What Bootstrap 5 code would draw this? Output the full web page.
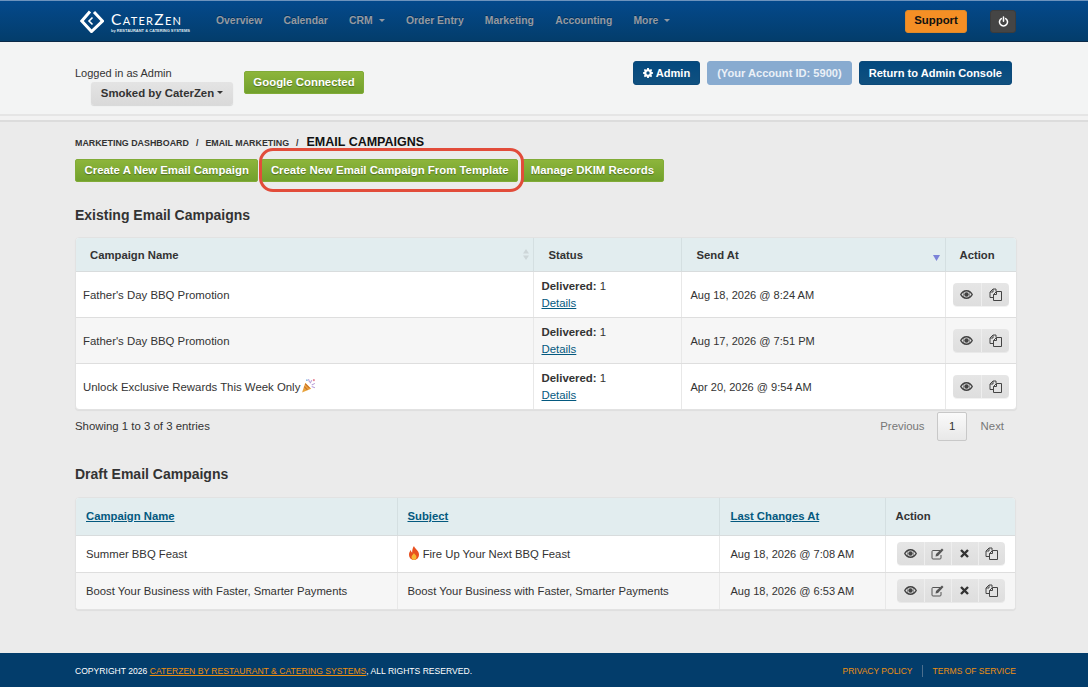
<!DOCTYPE html>
<html lang="en">

<head>
    <meta charset="UTF-8" />
    <meta name="viewport" content="width=device-width, initial-scale=1.0">
    <title>Email Campaigns</title>
    <link href="https://cdn.jsdelivr.net/npm/bootstrap@5.3.0/dist/css/bootstrap.min.css" rel="stylesheet">
    <style>
        html, body { height: 100%; }
        body { font-family: "Liberation Sans", Arial, sans-serif; font-size: 11.4px; color: #333; background: #ebebeb; height: 687px; overflow: hidden; display: flex; flex-direction: column; }
        .page-wrap { width: 942px; margin-left: 75px; }
        .top-bar { height: 42px; background: linear-gradient(#04498c, #033d6b); border-top: 1px solid #6d93bd; border-bottom: 1px solid #0b2a48; padding: 0; }
        .top-inner { height: 100%; display: flex; align-items: center; }
        .brand-box { width: 136px; margin-left: 5px; display: flex; align-items: center; gap: 7px; color: #fff; text-decoration: none; }
        .brand-name { font-family: Lato, sans-serif; font-size: 15.500px; line-height: 18px; letter-spacing: 1.300px; font-variant: small-caps; display: block; }
        .brand-sub { font-size: 4px; line-height: 5px; font-weight: bold; display: block; white-space: nowrap; color: #dfe8f0; }
        .top-nav { gap: 21.200px; }
        .top-nav .nav-link { color: #959aa1; font-size: 10.400px; font-weight: bold; padding: 0; text-shadow: 0 -1px 0 rgba(0,0,0,.3); }
        .top-nav .dropdown-toggle::after { border-top-width: 3px; border-left-width: 3px; border-right-width: 3px; margin-left: 6px; }
        .btn-support { background: #f58f25; color: #111; font-size: 11.4px; font-weight: bold; height: 23px; width: 62px; padding: 0; border: 1px solid #e08a2a; border-radius: 3px; margin-left: auto; }
        .btn-power { background: #454545; width: 26px; height: 23px; padding: 0; border: 1px solid #3c3c3c; border-radius: 3px; margin-left: 23px; margin-right: 1px; display: flex; align-items: center; justify-content: center; }
        .acct-band { height: 74px; background: #f3f4f4; border-bottom: 2px solid #e5e5e5; }
        .acct-rule { height: 6px; border-bottom: 2px solid #dcdcdc; background: #f2f2f2; }
        .acct-inner { display: flex; justify-content: space-between; padding-right: 5px; }
        .logged-box { width: 158px; padding-top: 24px; line-height: 15px; font-size: 11px; }
        .btn-store { display: block; background: linear-gradient(#e4e4e4, #d9d9d9); color: #333; font-size: 11.4px; font-weight: bold; width: 142px; height: 23px; padding: 0; border: 0; border-radius: 3px; margin: 1px 0 0 16px; box-shadow: 0 1px 1px rgba(0,0,0,.12); }
        .btn-store::after { border-top-width: 3px; border-left-width: 3px; border-right-width: 3px; margin-left: 3px; }
        .btn-leaf { background: linear-gradient(#8db53b, #71a02c); color: #fff; font-size: 11.4px; font-weight: bold; line-height: 21px; height: 23px; padding: 0 8.500px; border: 1px solid #81ab37; border-radius: 2px; text-shadow: 0 1px 1px rgba(0,0,0,.35); white-space: nowrap; }
        .btn-leaf:hover { color: #fff; }
        .google-btn { margin: 29px 0 0 11px; width: 120px; padding: 0; }
        .acct-right { display: flex; gap: 7px; padding-top: 19px; }
        .btn-navy { background: linear-gradient(#03497f, #10507f); background-color: #0d4f81; color: #fff; font-size: 11.100px; font-weight: bold; height: 24px; padding: 0 9px; border: 1px solid #0c4a7a; border-radius: 3px; display: flex; align-items: center; gap: 3px; }
        .btn-navy.btn-faded { background: #88abd0; border-color: #88abd0; color: #eaf0f7; }
        .crumb-line { margin-top: 13px; font-size: 8.900px; line-height: 14px; font-weight: bold; display: flex; align-items: baseline; gap: 7px; color: #333; }
        .crumb-line strong { font-size: 12.500px; color: #111; margin-left: 1px; }
        .action-row { position: relative; display: flex; gap: 3px; margin-top: 9px; }
        .highlight-ring { position: absolute; left: 184px; top: -11px; width: 265px; height: 44px; border: 3px solid #e24c3a; border-radius: 14px; pointer-events: none; }
        .section-title { font-size: 14px; line-height: 18px; font-weight: bold; color: #333; margin: 0; }
        .existing-title { margin-top: 24px; }
        .existing-card { margin-top: 13px; }
        .draft-title { margin-top: 24px; }
        .draft-card { margin-top: 14px; margin-right: 1px; }
        .table-card { background: #fff; border: 1px solid #e2e2e2; border-radius: 4px; overflow: hidden; box-shadow: 0 1px 1px rgba(0,0,0,.06); }
        .data-grid { --bs-table-bg: transparent; --bs-table-color: #333; margin: 0; font-size: 11.4px; table-layout: fixed; width: 100%; }
        .data-grid th { background: #e2edef; font-weight: bold; font-size: 11.300px; color: #333; vertical-align: middle; border-right: 1px solid #d4dfe1; border-bottom: 1px solid #d8dcdd; padding: 2px 0 0 15px; position: relative; }
        .data-grid td { vertical-align: middle; border-right: 1px solid #e8e8e8; border-bottom: 1px solid #dedede; padding: 2px 0 0 8px; }
        .data-grid td:last-child { padding-top: 0; }
        .data-grid tr > :last-child { border-right: 0; }
        .data-grid tbody tr:last-child td { border-bottom: 0; }
        .data-grid tbody tr:nth-child(even) td { background: #f6f6f6; }
        .data-grid td.stamp-cell { font-size: 11.050px; }
        .sent-grid thead tr { height: 33px; }
        .sent-grid tbody tr { height: 46px; }
        .sent-grid td { line-height: 17px; }
        .sent-grid th:first-child { padding-left: 14px; }
        .sent-grid td:first-child { padding-left: 7px; }
        .sent-grid td:nth-child(3) { padding-left: 9px; }
        .sent-grid th:last-child { padding-left: 14px; }
        .sent-grid td:last-child { padding-left: 7px; }
        .draft-grid thead tr { height: 37px; }
        .draft-grid tbody tr { height: 37px; }
        .draft-grid th, .draft-grid td { padding-left: 10px; }
        .draft-grid th { padding-top: 0; }
        .draft-grid td { font-size: 11.300px; }
        .draft-grid th:nth-child(3), .draft-grid td:nth-child(3) { padding-left: 11px; }
        .draft-grid td:last-child { padding-left: 11px; }
        .draft-grid .act-group span { width: 27px; }
        .data-grid a { color: #04597f; }
        .sort-mark { position: absolute; right: 4px; top: 11px; }
        .sort-mark.sort-down { top: 17px; right: 5px; }
        .act-group { display: inline-flex; height: 23px; border-radius: 4px; overflow: hidden; background: linear-gradient(#e6e6e6, #dedede); box-shadow: 0 1px 0 rgba(0,0,0,.05); vertical-align: middle; }
        .act-group span { width: 28px; display: flex; align-items: center; justify-content: center; border-left: 1px solid #eeeeee; }
        .act-group span:first-child { border-left: 0; }
        .emoji-mark { margin-left: 1px; vertical-align: -2px; }
        .table-foot { display: flex; justify-content: space-between; align-items: center; height: 31px; padding-top: 2px; }
        .pager-box { display: flex; align-items: center; color: #777; padding-right: 13px; }
        .pager-current { width: 30px; height: 29px; display: flex; align-items: center; justify-content: center; border: 1px solid #c8c8c8; border-radius: 2px; background: linear-gradient(#fafafa, #e8e8e8); margin: 0 13.500px 0 12.500px; color: #333; }
        .site-foot { margin-top: auto; height: 34px; padding-top: 2px; background: #033d6b; color: #fff; font-size: 8.580px; display: flex; align-items: center; }
        .foot-inner { display: flex; justify-content: space-between; width: 941px; margin-left: 75px; }
        .site-foot a { color: #ee8f10; text-decoration-thickness: 1px; }
        .foot-links { display: flex; gap: 9px; font-size: 8.500px; }
        .foot-links a { text-decoration: none; }
        .foot-links a + a { border-left: 1px solid #4c6f8e; padding-left: 10px; }
    </style>
</head>

<body>
    <nav class="navbar top-bar">
        <div class="page-wrap top-inner">
            <a class="brand-box" href="#">
                <svg width="24" height="24" viewBox="0 0 24 24" fill="none" stroke="#fff">
                    <path d="M10 2.500 L1.800 12 L11.500 22.500 L22.500 12 L14 3" stroke-width="3" />
                    <path d="M12.500 8.500 L9 12 L12.500 15.500" stroke-width="1.600" />
                </svg>
                <span>
                    <span class="brand-name">CaterZen</span>
                    <span class="brand-sub">by RESTAURANT &amp; CATERING SYSTEMS</span>
                </span>
            </a>
            <ul class="nav top-nav">
                <li class="nav-item"><a class="nav-link" href="#">Overview</a></li>
                <li class="nav-item"><a class="nav-link" href="#">Calendar</a></li>
                <li class="nav-item"><a class="nav-link dropdown-toggle" href="#">CRM</a></li>
                <li class="nav-item"><a class="nav-link" href="#">Order Entry</a></li>
                <li class="nav-item"><a class="nav-link" href="#">Marketing</a></li>
                <li class="nav-item"><a class="nav-link" href="#">Accounting</a></li>
                <li class="nav-item"><a class="nav-link dropdown-toggle" href="#">More</a></li>
            </ul>
            <button class="btn btn-support">Support</button>
            <button class="btn btn-power">
                <svg width="11" height="11" viewBox="0 0 12 12" fill="none" stroke="#fff" stroke-width="1.700" stroke-linecap="round">
                    <path d="M3.600 2.800 A4.400 4.400 0 1 0 8.400 2.800" />
                    <path d="M6 1 V5.600" />
                </svg>
            </button>
        </div>
    </nav>

    <div class="acct-band">
        <div class="page-wrap acct-inner">
            <div class="d-flex">
                <div class="logged-box">
                    Logged in as Admin
                    <button class="btn btn-store dropdown-toggle">Smoked by CaterZen</button>
                </div>
                <div><button class="btn btn-leaf google-btn">Google Connected</button></div>
            </div>
            <div class="acct-right">
                <button class="btn btn-navy">
                    <svg width="10" height="10" viewBox="0 0 12 12" fill="#fff">
                        <path fill-rule="evenodd" d="M5 0h2l.3 1.600 1 .4L9.700 1.100l1.300 1.300-.9 1.400.4 1L12 5v2l-1.500.3-.4 1 .9 1.400-1.300 1.300-1.400-.9-1 .4L7 12H5l-.3-1.500-1-.4-1.400.9L1 9.700l.9-1.400-.4-1L0 7V5l1.500-.3.4-1-.9-1.300L2.300 1.100l1.400.9 1-.4zM6 4a2 2 0 1 0 0 4 2 2 0 0 0 0-4z" />
                    </svg>
                    Admin
                </button>
                <button class="btn btn-navy btn-faded">(Your Account ID: 5900)</button>
                <button class="btn btn-navy">Return to Admin Console</button>
            </div>
        </div>
    </div>
    <div class="acct-rule"></div>

    <main class="page-wrap">
        <div class="crumb-line">
            <span>MARKETING DASHBOARD</span><span>/</span><span>EMAIL MARKETING</span><span>/</span><strong>EMAIL CAMPAIGNS</strong>
        </div>
        <div class="action-row">
            <a class="btn btn-leaf" href="#">Create A New Email Campaign</a>
            <a class="btn btn-leaf" href="#">Create New Email Campaign From Template</a>
            <a class="btn btn-leaf" href="#">Manage DKIM Records</a>
            <div class="highlight-ring"></div>
        </div>

        <h2 class="section-title existing-title">Existing Email Campaigns</h2>
        <div class="table-card existing-card">
            <table class="table data-grid sent-grid">
                <colgroup>
                    <col style="width: 457px"><col style="width: 148px"><col style="width: 264px"><col>
                </colgroup>
                <thead>
                    <tr>
                        <th>Campaign Name
                            <svg class="sort-mark" width="6" height="11" viewBox="0 0 6 11" fill="#cdd6d8"><path d="M3 0 6 4.500H0zM3 11 0 6.500h6z" /></svg>
                        </th>
                        <th>Status</th>
                        <th>Send At
                            <svg class="sort-mark sort-down" width="7" height="6" viewBox="0 0 7 6" fill="#7b82d8"><path d="M0 0h7L3.500 6z" /></svg>
                        </th>
                        <th>Action</th>
                    </tr>
                </thead>
                <tbody id="sentRows"></tbody>
            </table>
        </div>
        <div class="table-foot">
            <span>Showing 1 to 3 of 3 entries</span>
            <div class="pager-box"><span>Previous</span><span class="pager-current">1</span><span>Next</span></div>
        </div>

        <h2 class="section-title draft-title">Draft Email Campaigns</h2>
        <div class="table-card draft-card">
            <table class="table data-grid draft-grid">
                <colgroup>
                    <col style="width: 321px"><col style="width: 322px"><col style="width: 166px"><col>
                </colgroup>
                <thead>
                    <tr>
                        <th><a href="#">Campaign Name</a></th>
                        <th><a href="#">Subject</a></th>
                        <th><a href="#">Last Changes At</a></th>
                        <th>Action</th>
                    </tr>
                </thead>
                <tbody id="draftRows"></tbody>
            </table>
        </div>
    </main>

    <footer class="site-foot">
        <div class="foot-inner">
            <span>COPYRIGHT 2026 <a href="#">CATERZEN BY RESTAURANT &amp; CATERING SYSTEMS</a>, ALL RIGHTS RESERVED.</span>
            <div class="foot-links"><a href="#">PRIVACY POLICY</a><a href="#">TERMS OF SERVICE</a></div>
        </div>
    </footer>

    <script src="https://cdn.jsdelivr.net/npm/bootstrap@5.3.0/dist/js/bootstrap.bundle.min.js"></script>
    <script>
        const eyeIcon = '<svg width="13" height="9" viewBox="0 0 13 9"><path fill="#444" fill-rule="evenodd" d="M6.500 0C3.500 0 1.200 2 0 4.500 1.200 7 3.500 9 6.500 9S11.800 7 13 4.500C11.800 2 9.500 0 6.500 0zM6.500 1.500a3 3 0 1 1 0 6 3 3 0 0 1 0-6zM1.500 4.500a6 6 0 0 1 2.500-2.300 3.500 3.500 0 0 0 0 4.600 6 6 0 0 1-2.500-2.300zM11.500 4.500A6 6 0 0 1 9 6.800a3.500 3.500 0 0 0 0-4.600 6 6 0 0 1 2.500 2.300z"/><circle cx="6.500" cy="4.500" r="2.200" fill="#444"/></svg>';
        const copyIcon = '<svg width="13" height="13" viewBox="0 0 13 13" fill="none" stroke="#444" stroke-width="1"><path d="M7 3.500V1H4L1 4v5.500h3.500"/><path d="M4 1v3H1"/><path d="M4.500 6.500l3-3h5v9h-8z" fill="#e2e2e2"/><path d="M7.500 3.500v3h-3"/></svg>';
        const editIcon = '<svg width="13" height="12" viewBox="0 0 13 12" fill="none" stroke="#555"><path d="M9 2.500H2A1 1 0 0 0 1 3.500v6.500a1 1 0 0 0 1 1h7a1 1 0 0 0 1-1V7"/><path d="M4.500 8.500 5 6l6-5.500 1.500 1.500L7 8z" fill="#555" stroke="none"/></svg>';
        const closeIcon = '<svg width="9" height="9" viewBox="0 0 9 9" stroke="#333" stroke-width="2.400"><path d="M1 1l7 7M8 1l-7 7"/></svg>';
        const partyIcon = '<svg class="emoji-mark" width="15" height="15" viewBox="0 0 14 14"><path d="M1 13.500 4 4.500l5.500 5.500z" fill="#e8a33d"/><path d="M3 8l3 3M4 5.500l4 4" stroke="#c9702a" stroke-width="1"/><path d="M7 1l1 3M10 2 8.500 5M13 5l-3 1.500M13 9l-3-1" stroke="#b9a0d8" stroke-width="1"/><circle cx="12" cy="2" r="1" fill="#e88a9a"/><circle cx="5.500" cy="2" r=".8" fill="#7cb6e0"/></svg>';
        const fireIcon = '<svg width="12" height="14" viewBox="0 0 12 14" style="vertical-align:-2px"><path d="M6 0c.5 2.500 5 4.500 5 8.500C11 11.500 9 14 6 14S1 11.500 1 8.500C1 6.500 2 5 3 4c0 1.500.5 2.300 1.200 2.500C4 4 4.800 1.500 6 0z" fill="#e8501f"/><path d="M6 7c.3 1.300 2.500 2.300 2.500 4C8.500 12.700 7.300 14 6 14s-2.500-1.300-2.500-3C3.500 9.500 5.300 8.500 6 7z" fill="#f7b633"/></svg>';

        const sentCampaigns = [
            { name: "Father's Day BBQ Promotion", at: "Aug 18, 2026 @ 8:24 AM" },
            { name: "Father's Day BBQ Promotion", at: "Aug 17, 2026 @ 7:51 PM" },
            { name: "Unlock Exclusive Rewards This Week Only" + partyIcon, at: "Apr 20, 2026 @ 9:54 AM" }
        ];
        const draftCampaigns = [
            { name: "Summer BBQ Feast", subject: fireIcon + " Fire Up Your Next BBQ Feast", at: "Aug 18, 2026 @ 7:08 AM" },
            { name: "Boost Your Business with Faster, Smarter Payments", subject: "Boost Your Business with Faster, Smarter Payments", at: "Aug 18, 2026 @ 6:53 AM" }
        ];

        function actions(icons) {
            return '<div class="act-group">' + icons.map((i) => "<span>" + i + "</span>").join("") + "</div>";
        }

        document.getElementById("sentRows").innerHTML = sentCampaigns.map((c) => `<tr>
            <td>${c.name}</td>
            <td><b>Delivered:</b> 1<br><a href="#">Details</a></td>
            <td class="stamp-cell">${c.at}</td>
            <td>${actions([eyeIcon, copyIcon])}</td>
        </tr>`).join("");

        document.getElementById("draftRows").innerHTML = draftCampaigns.map((c) => `<tr>
            <td>${c.name}</td>
            <td>${c.subject}</td>
            <td class="stamp-cell">${c.at}</td>
            <td>${actions([eyeIcon, editIcon, closeIcon, copyIcon])}</td>
        </tr>`).join("");
    </script>
</body>

</html>
